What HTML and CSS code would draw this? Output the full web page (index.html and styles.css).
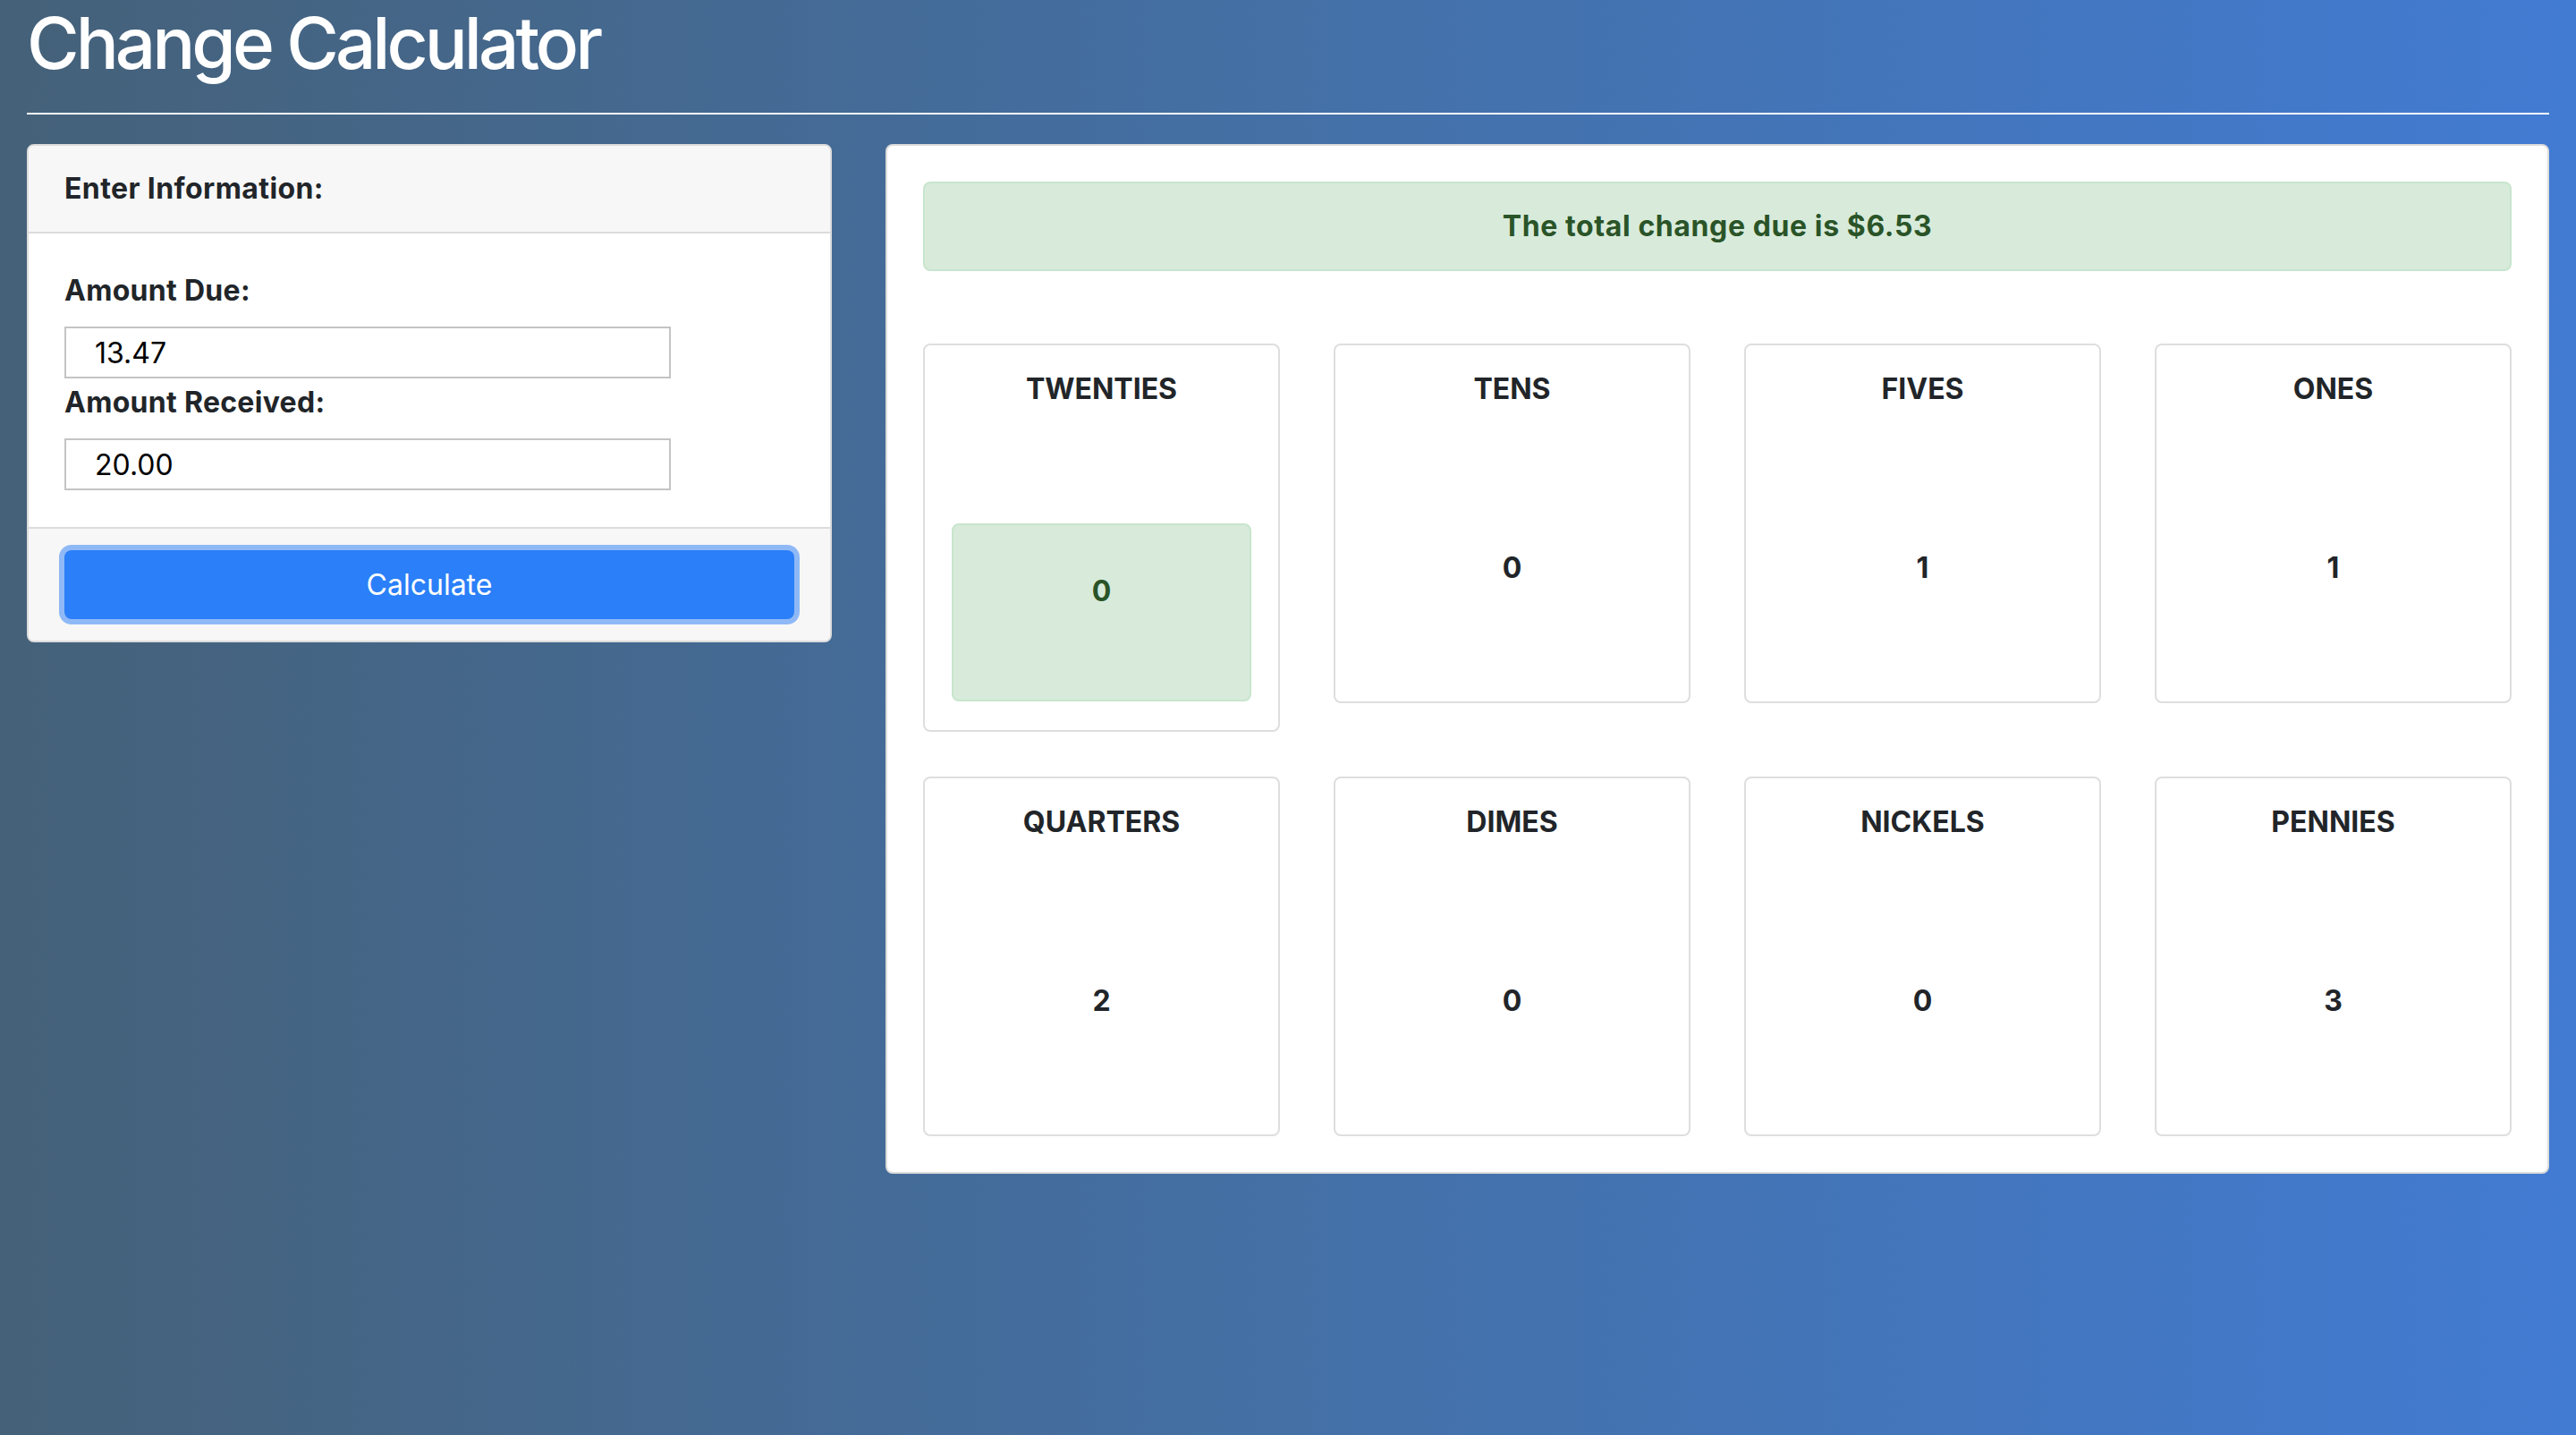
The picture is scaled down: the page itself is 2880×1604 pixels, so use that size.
FILE: index.html
```html
<!DOCTYPE html>
<html lang="en">
<head>
<meta charset="utf-8">
<title>Change Calculator</title>
<link rel="stylesheet" href="styles.css">
</head>
<body>
<div class="page">
  <h1 class="title">Change Calculator</h1>
  <hr class="rule">
  <div class="layout">
    <div class="card form-card">
      <div class="card-header">Enter Information:</div>
      <div class="card-body">
        <label class="field-label" for="due">Amount Due:</label>
        <input class="field-input" id="due" type="text" value="13.47">
        <label class="field-label" for="received">Amount Received:</label>
        <input class="field-input" id="received" type="text" value="20.00">
      </div>
      <div class="card-footer">
        <button class="btn-calc" type="button">Calculate</button>
      </div>
    </div>
    <div class="card result-card">
      <div class="total-alert">The total change due is $6.53</div>
      <div class="coin-grid">
        <div class="coin highlight">
          <div class="coin-name">TWENTIES</div>
          <div class="coin-value">0</div>
        </div>
        <div class="coin">
          <div class="coin-name">TENS</div>
          <div class="coin-value">0</div>
        </div>
        <div class="coin">
          <div class="coin-name">FIVES</div>
          <div class="coin-value">1</div>
        </div>
        <div class="coin">
          <div class="coin-name">ONES</div>
          <div class="coin-value">1</div>
        </div>
        <div class="coin">
          <div class="coin-name">QUARTERS</div>
          <div class="coin-value">2</div>
        </div>
        <div class="coin">
          <div class="coin-name">DIMES</div>
          <div class="coin-value">0</div>
        </div>
        <div class="coin">
          <div class="coin-name">NICKELS</div>
          <div class="coin-value">0</div>
        </div>
        <div class="coin">
          <div class="coin-name">PENNIES</div>
          <div class="coin-value">3</div>
        </div>
      </div>
    </div>
  </div>
</div>
</body>
</html>
```

FILE: styles.css
```css
* { box-sizing: border-box; }

html, body {
  margin: 0;
  padding: 0;
}

body {
  min-height: 100vh;
  background: linear-gradient(90deg, #456179 0%, #4470a6 50%, #427bd2 100%);
  font-family: Inter, "Noto Sans", sans-serif;
  color: #212529;
  font-size: 32px;
  line-height: 48px;
}

.page {
  padding: 0 30px;
}

.title {
  margin: 0;
  font-size: 80px;
  line-height: 96px;
  font-weight: 500;
  color: #ffffff;
  letter-spacing: -4px;
}

.rule {
  margin: 30px 0 33px;
  border: 0;
  height: 2px;
  background: #ffffff;
}

.layout {
  display: grid;
  grid-template-columns: 900px 1fr;
  column-gap: 60px;
  align-items: start;
}

.card {
  background: #ffffff;
  border: 2px solid #dcdcdc;
  border-radius: 8px;
}

.card-header {
  background: #f7f7f7;
  padding: 24px 40px;
  border-bottom: 2px solid #dcdcdc;
  border-radius: 6px 6px 0 0;
  font-weight: 700;
  letter-spacing: 0.4px;
}

.card-body {
  padding: 40px 40px 38px;
  display: flex;
  flex-direction: column;
  align-items: flex-start;
}

.field-label {
  font-weight: 700;
  margin-bottom: 16px;
  letter-spacing: 0.3px;
}

.field-input {
  width: 678px;
  height: 58px;
  border: 2px solid #c4c4c4;
  border-radius: 0;
  padding: 0 32px;
  font-family: Inter, "Noto Sans", sans-serif;
  font-size: 32px;
  color: #000000;
  background: #ffffff;
  margin-bottom: 3px;
  outline: none;
}

.card-footer {
  background: #f7f7f7;
  border-top: 2px solid #dcdcdc;
  padding: 24px 40px;
  border-radius: 0 0 6px 6px;
}

.btn-calc {
  display: block;
  width: 100%;
  height: 77px;
  background: #2b7ff8;
  color: #ffffff;
  border: 0;
  border-radius: 8px;
  box-shadow: 0 0 0 6px #8fb9f6;
  font-family: Inter, "Noto Sans", sans-serif;
  font-size: 32px;
  font-weight: 400;
}

.result-card {
  padding: 40px 40px 40px;
}

.total-alert {
  background: #d8ebdb;
  border: 2px solid #c8e5cd;
  border-radius: 8px;
  color: #2a5428;
  font-weight: 700;
  text-align: center;
  padding: 24px 40px;
  margin-bottom: 81px;
  letter-spacing: 0.6px;
}

.coin-grid {
  display: grid;
  grid-template-columns: repeat(4, 1fr);
  column-gap: 60px;
  row-gap: 50px;
  align-items: start;
}

.coin {
  border: 2px solid #dedede;
  border-radius: 8px;
  padding: 25px 30px 0;
  text-align: center;
  font-weight: 700;
}

.coin-name {
  line-height: 48px;
}

.coin-value {
  margin-top: 126px;
  height: 199px;
  padding-top: 26px;
}

.coin.highlight {
  padding-bottom: 32px;
}

.coin.highlight .coin-value {
  background: #d8ebdb;
  border: 2px solid #c8e5cd;
  border-radius: 8px;
  color: #2a5428;
  padding-top: 50px;
}
```
